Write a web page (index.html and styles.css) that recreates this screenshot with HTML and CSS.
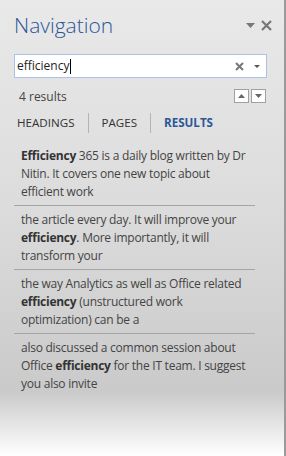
FILE: index.html
```html
<!DOCTYPE html>
<html lang="en">
<head>
  <meta charset="UTF-8" />
  <meta name="viewport" content="width=device-width, initial-scale=1" />
  <title>Navigation</title>
  <link rel="stylesheet" href="styles.css">
</head>
<body>
  <div class="pane">
    <div class="header">
      <h1>Navigation</h1>
      <div class="header-tools">
        <svg class="menu-arrow" width="9" height="5" viewBox="0 0 9 5"><path d="M0 0H9L4.5 5Z" fill="#777"/></svg>
        <svg class="close" width="11" height="11" viewBox="0 0 11 11"><path d="M1 1L10 10M10 1L1 10" stroke="#777" stroke-width="2.2"/></svg>
      </div>
    </div>

    <div class="search">
      <span class="query">efficiency</span><span class="caret"></span>
      <svg class="clear" width="9" height="9" viewBox="0 0 9 9"><path d="M1 1L8 8M8 1L1 8" stroke="#777" stroke-width="2"/></svg>
      <svg class="drop" width="6" height="3" viewBox="0 0 6 3"><path d="M0 0H6L3 3Z" fill="#555"/></svg>
    </div>

    <div class="count-row">
      <span class="count">4 results</span>
      <div class="steppers">
        <button class="step"><svg width="7" height="4" viewBox="0 0 7 4"><path d="M0 4H7L3.5 0Z" fill="#666"/></svg></button>
        <button class="step"><svg width="7" height="4" viewBox="0 0 7 4"><path d="M0 0H7L3.5 4Z" fill="#666"/></svg></button>
      </div>
    </div>

    <div class="tabs">
      <span class="tab">HEADINGS</span>
      <span class="tab">PAGES</span>
      <span class="tab active">RESULTS</span>
    </div>

    <ul class="results">
      <li><b>Efficiency</b> 365 is a daily blog written by Dr Nitin. It covers one new topic about efficient work</li>
      <li>the article every day. It will improve your <b>efficiency</b>. More importantly, it will transform your</li>
      <li>the way Analytics as well as Office related <b>efficiency</b> (unstructured work optimization) can be a</li>
      <li>also discussed a common session about Office <b>efficiency</b> for the IT team. I suggest you also invite</li>
    </ul>
  </div>
</body>
</html>
```

FILE: styles.css
```css
html, body {
  margin: 0;
  height: 100%;
}
body {
  font-family: "Open Sans", "Noto Sans", sans-serif;
  color: #444;
  background: linear-gradient(#e9e9e9 0, #dcdcdc 45%, #cacaca 86%, #ffffff 100%);
}
.pane {
  box-sizing: border-box;
  width: 286px;
  height: 456px;
  border-right: 2px solid #9a9a9a;
  padding: 0 19px 0 14px;
}
.header {
  display: flex;
  align-items: center;
  justify-content: space-between;
  height: 46px;
  padding-top: 4px;
  box-sizing: border-box;
}
h1 {
  margin: 0;
  font-size: 21px;
  font-weight: 300;
  color: #2b5797;
}
.header-tools {
  display: flex;
  align-items: center;
  gap: 6px;
  margin-right: -7px;
}
.search {
  display: flex;
  align-items: center;
  height: 24px;
  margin-top: 8px;
  width: 253px;
  box-sizing: border-box;
  background: #fff;
  border: 1px solid #a9c2e6;
  padding: 0 6px 0 2px;
  font-size: 12px;
  color: #222;
}
.query {
  line-height: 1;
}
.caret {
  display: inline-block;
  width: 1px;
  height: 15px;
  background: #000;
  margin-left: 1px;
}
.clear {
  margin-left: auto;
  margin-right: 10px;
}
.count-row {
  display: flex;
  align-items: center;
  justify-content: space-between;
  margin-top: 11px;
  padding-left: 5px;
  width: 252px;
  box-sizing: border-box;
  height: 14px;
}
.count {
  font-size: 12px;
}
.steppers {
  display: flex;
  gap: 2px;
}
.step {
  width: 15px;
  height: 14px;
  padding: 0;
  border: 1px solid #a0a0a0;
  background: #fff;
  display: flex;
  align-items: center;
  justify-content: center;
}
.tabs {
  display: flex;
  align-items: center;
  margin-top: 10px;
  height: 20px;
  padding-left: 3px;
}
.tab {
  font-size: 11.6px;
  color: #333;
  padding: 0 13px;
  border-left: 1px solid #b4b4b4;
  line-height: 20px;
}
.tab:first-child {
  padding-left: 0;
  border-left: none;
}
.tab.active {
  color: #2b5797;
  font-weight: bold;
}
.results {
  list-style: none;
  margin: 9px 0 0;
  padding: 0;
  width: 241px;
}
.results li {
  font-size: 12px;
  line-height: 18px;
  letter-spacing: -0.25px;
  padding: 5px 0 4px 7px;
  border-bottom: 1px solid #a5a5a5;
}
.results li:last-child {
  border-bottom: none;
}
.results b {
  color: #333;
}
```
